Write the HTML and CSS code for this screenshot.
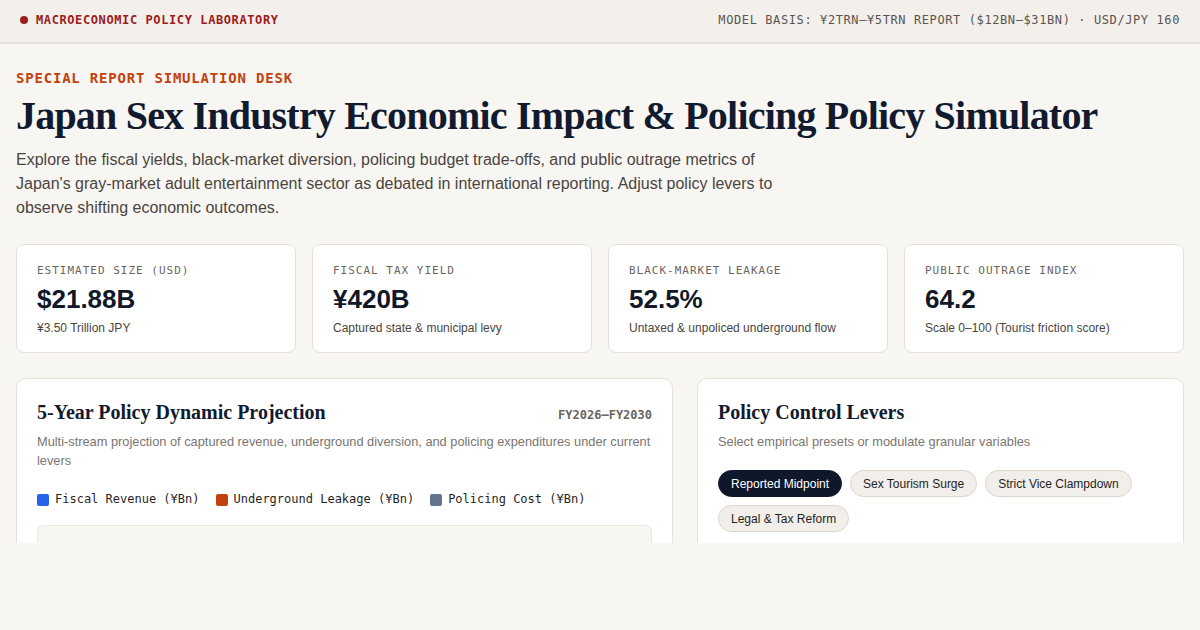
FILE: index.html
```html
<!DOCTYPE html>
<html>
<head>
<meta charset="utf-8">
<link rel="stylesheet" href="styles.css">
</head>
<body>
<div class="viewport">
  <header class="topbar">
    <div class="brand"><span class="dot"></span>MACROECONOMIC POLICY LABORATORY</div>
    <div class="basis">MODEL BASIS: ¥2TRN–¥5TRN REPORT ($12BN–$31BN) · USD/JPY 160</div>
  </header>
  <main class="main">
    <div class="eyebrow">SPECIAL REPORT SIMULATION DESK</div>
    <h1 class="title">Japan Sex Industry Economic Impact &amp; Policing Policy Simulator</h1>
    <p class="lead">Explore the fiscal yields, black-market diversion, policing budget trade-offs, and public outrage metrics of Japan's gray-market adult entertainment sector as debated in international reporting. Adjust policy levers to observe shifting economic outcomes.</p>

    <section class="stats">
      <div class="stat">
        <div class="stat-label">ESTIMATED SIZE (USD)</div>
        <div class="stat-value">$21.88B</div>
        <div class="stat-sub">¥3.50 Trillion JPY</div>
      </div>
      <div class="stat">
        <div class="stat-label">FISCAL TAX YIELD</div>
        <div class="stat-value">¥420B</div>
        <div class="stat-sub">Captured state &amp; municipal levy</div>
      </div>
      <div class="stat">
        <div class="stat-label">BLACK-MARKET LEAKAGE</div>
        <div class="stat-value">52.5%</div>
        <div class="stat-sub">Untaxed &amp; unpoliced underground flow</div>
      </div>
      <div class="stat">
        <div class="stat-label">PUBLIC OUTRAGE INDEX</div>
        <div class="stat-value">64.2</div>
        <div class="stat-sub">Scale 0–100 (Tourist friction score)</div>
      </div>
    </section>

    <section class="panels">
      <div class="panel">
        <div class="panel-head">
          <h2 class="panel-title">5-Year Policy Dynamic Projection</h2>
          <span class="panel-tag">FY2026–FY2030</span>
        </div>
        <p class="panel-desc">Multi-stream projection of captured revenue, underground diversion, and policing expenditures under current levers</p>
        <div class="legend">
          <span class="legend-item"><span class="swatch blue"></span>Fiscal Revenue (¥Bn)</span>
          <span class="legend-item"><span class="swatch orange"></span>Underground Leakage (¥Bn)</span>
          <span class="legend-item"><span class="swatch slate"></span>Policing Cost (¥Bn)</span>
        </div>
        <div class="chart"></div>
      </div>
      <div class="panel">
        <div class="panel-head">
          <h2 class="panel-title">Policy Control Levers</h2>
        </div>
        <p class="panel-desc">Select empirical presets or modulate granular variables</p>
        <div class="pills">
          <button class="pill active">Reported Midpoint</button>
          <button class="pill">Sex Tourism Surge</button>
          <button class="pill">Strict Vice Clampdown</button>
          <button class="pill">Legal &amp; Tax Reform</button>
        </div>
      </div>
    </section>
  </main>
</div>
</body>
</html>
```

FILE: styles.css
```css
html, body {
  margin: 0;
  padding: 0;
  background: #f8f6f2;
}
body {
  font-family: "Liberation Sans", Arial, sans-serif;
  color: #111827;
}
.viewport {
  height: 543px;
  overflow: hidden;
}
.topbar {
  height: 44px;
  box-sizing: border-box;
  background: #f3efeb;
  border-bottom: 2px solid #e6e0da;
  display: flex;
  align-items: center;
  justify-content: space-between;
  padding: 0 20px 2px;
  font-family: "DejaVu Sans Mono", monospace;
  font-size: 12px;
  letter-spacing: 0.6px;
}
.brand {
  color: #9b1c1c;
  font-weight: bold;
  display: flex;
  align-items: center;
}
.dot {
  width: 8px;
  height: 8px;
  border-radius: 50%;
  background: #9b1c1c;
  margin-right: 8px;
}
.basis {
  color: #5a5550;
}
.main {
  padding: 25px 16px 0;
}
.eyebrow {
  font-family: "DejaVu Sans Mono", monospace;
  font-weight: bold;
  font-size: 14px;
  letter-spacing: 0.8px;
  color: #c2410c;
  line-height: 18px;
}
.title {
  font-family: "Liberation Serif", "Times New Roman", serif;
  font-weight: bold;
  font-size: 40px;
  letter-spacing: -0.8px;
  line-height: 44px;
  color: #111a2e;
  margin: 7px 0 10px;
  white-space: nowrap;
}
.lead {
  font-size: 16px;
  line-height: 24px;
  color: #4a4540;
  max-width: 780px;
  margin: 0 0 24px;
}
.stats {
  display: grid;
  grid-template-columns: repeat(4, 1fr);
  gap: 16px;
  margin-bottom: 25px;
}
.stat {
  background: #fff;
  border: 1px solid #e6e0d8;
  border-radius: 8px;
  padding: 18px 20px 17px;
  height: 109px;
  box-sizing: border-box;
}
.stat-label {
  font-family: "DejaVu Sans Mono", monospace;
  font-size: 11px;
  letter-spacing: 1px;
  color: #6b6560;
  line-height: 14px;
  margin-top: 1px;
}
.stat-value {
  font-size: 26px;
  font-weight: bold;
  line-height: 30px;
  margin-top: 6px;
  color: #111827;
}
.stat-sub {
  font-size: 12px;
  color: #4a4540;
  margin-top: 7px;
  line-height: 14px;
}
.panels {
  display: grid;
  grid-template-columns: 657px 1fr;
  gap: 24px;
}
.panel {
  background: #fff;
  border: 1px solid #e6e0d8;
  border-radius: 10px;
  padding: 20px 20px 20px;
  min-height: 300px;
}
.panel-head {
  display: flex;
  justify-content: space-between;
  align-items: baseline;
}
.panel-title {
  font-family: "Liberation Serif", "Times New Roman", serif;
  font-weight: bold;
  font-size: 20px;
  line-height: 26px;
  color: #111a2e;
  margin: 0;
}
.panel-tag {
  font-family: "DejaVu Sans Mono", monospace;
  font-weight: bold;
  font-size: 12px;
  color: #6b6560;
}
.panel-desc {
  font-size: 12.8px;
  line-height: 19px;
  color: #7a7570;
  margin: 7px 0 0;
}
.legend {
  display: flex;
  gap: 16px;
  margin-top: 22px;
  font-family: "DejaVu Sans Mono", monospace;
  font-size: 12px;
  line-height: 15px;
  color: #1f1f1f;
}
.legend-item {
  display: flex;
  align-items: center;
}
.swatch {
  width: 12px;
  height: 12px;
  border-radius: 2px;
  margin-right: 6px;
}
.swatch.blue { background: #2563eb; }
.swatch.orange { background: #c2410c; }
.swatch.slate { background: #64748b; }
.chart {
  margin-top: 18px;
  height: 240px;
  background: #f8f6f2;
  border: 1px solid #ece6e0;
  border-radius: 6px;
}
.pills {
  display: flex;
  flex-wrap: wrap;
  gap: 8px;
  margin-top: 19px;
}
.pill {
  font-family: "Liberation Sans", Arial, sans-serif;
  font-size: 12px;
  height: 27px;
  padding: 0 12px;
  border-radius: 14px;
  border: 1px solid #ddd5cb;
  background: #f2eeea;
  color: #1f1f1f;
}
.pill.active {
  background: #0f172a;
  border-color: #0f172a;
  color: #fff;
}
```
